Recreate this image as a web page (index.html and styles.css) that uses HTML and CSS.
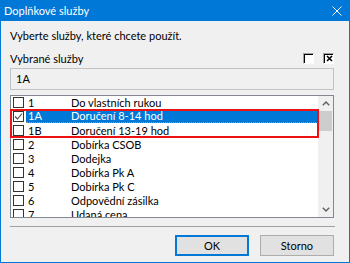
FILE: index.html
```html
<!DOCTYPE html>
<html lang="cs">
    <head>
        <meta charset="UTF-8" />
        <title>Doplňkové služby</title>
        <link rel="stylesheet" href="styles.css">
    </head>
    <body>
        <div class="window">
            <div class="titlebar">
                <span>Doplňkové služby</span>
                <svg class="close" width="10" height="10" viewBox="0 0 10 10">
                    <path d="M0.5 0.5L9.5 9.5M9.5 0.5L0.5 9.5" stroke="#fff" stroke-width="1" fill="none" />
                </svg>
            </div>

            <div class="content">
                <div class="prompt">Vyberte služby, které chcete použít.</div>

                <div class="label-row">
                    <span>Vybrané služby</span>
                    <div class="tools">
                        <span class="box3d"></span>
                        <span class="box3d">
                            <svg width="7" height="7" viewBox="0 0 7 7">
                                <path d="M1 1L6 6M6 1L1 6" stroke="#000" stroke-width="1.6" fill="none" />
                            </svg>
                        </span>
                    </div>
                </div>

                <div class="textbox">1A</div>

                <div class="listbox">
                    <div class="rows">
                        <div class="row"><span class="chk"></span><span class="cell"><span class="code">1</span>Do vlastních rukou</span></div>
                        <div class="row selected">
                            <span class="chk">
                                <svg width="9" height="9" viewBox="0 0 9 9">
                                    <path d="M1 4.5L3.5 7L8 1.5" stroke="#444" stroke-width="1.1" fill="none" />
                                </svg>
                            </span>
                            <span class="cell"><span class="code">1A</span>Doručení 8-14 hod</span>
                        </div>
                        <div class="row"><span class="chk"></span><span class="cell"><span class="code">1B</span>Doručení 13-19 hod</span></div>
                        <div class="row"><span class="chk"></span><span class="cell"><span class="code">2</span>Dobírka CSOB</span></div>
                        <div class="row"><span class="chk"></span><span class="cell"><span class="code">3</span>Dodejka</span></div>
                        <div class="row"><span class="chk"></span><span class="cell"><span class="code">4</span>Dobírka Pk A</span></div>
                        <div class="row"><span class="chk"></span><span class="cell"><span class="code">5</span>Dobírka Pk C</span></div>
                        <div class="row"><span class="chk"></span><span class="cell"><span class="code">6</span>Odpovědní zásilka</span></div>
                        <div class="row"><span class="chk"></span><span class="cell"><span class="code">7</span>Udaná cena</span></div>
                    </div>

                    <div class="scrollbar">
                        <div class="arrow">
                            <svg width="8" height="5" viewBox="0 0 8 5">
                                <path d="M0.8 4.2L4 1L7.2 4.2" stroke="#606060" stroke-width="1.4" fill="none" />
                            </svg>
                        </div>
                        <div class="thumb"></div>
                        <div class="track"></div>
                        <div class="arrow">
                            <svg width="8" height="5" viewBox="0 0 8 5">
                                <path d="M0.8 0.8L4 4L7.2 0.8" stroke="#606060" stroke-width="1.4" fill="none" />
                            </svg>
                        </div>
                    </div>

                    <div class="mark"></div>
                </div>

                <div class="separator"></div>

                <div class="buttons">
                    <button class="btn default">OK</button>
                    <button class="btn">Storno</button>
                </div>
            </div>
        </div>
    </body>
</html>
```

FILE: styles.css
```css
* {
    box-sizing: border-box;
}
body {
    margin: 0;
    font-family: Lato, "Liberation Sans", sans-serif;
    font-size: 11px;
    color: #000;
    background: #f0f0f0;
}
.window {
    width: 350px;
    height: 263px;
    border: 1px solid #0078d7;
    border-top: none;
    background: #f0f0f0;
    display: flex;
    flex-direction: column;
}
.titlebar {
    height: 21px;
    flex: none;
    background: #0078d7;
    color: #fff;
    display: flex;
    align-items: center;
    justify-content: space-between;
    padding: 0 7px 0 3px;
}
.content {
    padding: 8px 15px 0 9px;
    display: flex;
    flex-direction: column;
}
.prompt {
    line-height: 14px;
}
.label-row {
    margin-top: 8px;
    height: 14px;
    display: flex;
    align-items: center;
    justify-content: space-between;
}
.tools {
    display: flex;
    gap: 9px;
}
.box3d {
    width: 11px;
    height: 11px;
    background: #fff;
    border-top: 1px solid #a0a0a0;
    border-left: 1px solid #a0a0a0;
    border-right: 1px solid #fff;
    border-bottom: 1px solid #fff;
    box-shadow: inset 1px 1px 0 #000;
    display: flex;
    align-items: center;
    justify-content: center;
    padding: 1px 0 0 1px;
}
.textbox {
    margin-top: 3px;
    height: 22px;
    border: 1px solid #c2c2c2;
    padding-left: 5px;
    line-height: 20px;
}
.listbox {
    margin-top: 5px;
    height: 123px;
    border: 1px solid #828790;
    background: #fff;
    display: flex;
    position: relative;
}
.rows {
    flex: 1;
    overflow: hidden;
    padding-top: 0;
    margin-top: -1px;
}
.row {
    height: 14px;
    display: flex;
    align-items: center;
}
.chk {
    width: 11px;
    height: 11px;
    margin: 0 2px;
    border: 1px solid #333;
    background: #fff;
    display: flex;
    align-items: center;
    justify-content: center;
}
.cell {
    flex: 1;
    height: 14px;
    padding-left: 2px;
    display: flex;
    align-items: center;
    white-space: nowrap;
}
.code {
    width: 43px;
}
.selected .cell {
    background: #0078d7;
    color: #fff;
    border-bottom: 1px dotted #d98a3a;
}
.scrollbar {
    width: 15px;
    background: #f0f0f0;
    display: flex;
    flex-direction: column;
}
.arrow {
    height: 15px;
    display: flex;
    align-items: center;
    justify-content: center;
}
.thumb {
    height: 20px;
    margin: 0 1px;
    background: #cdcdcd;
}
.track {
    flex: 1;
}
.mark {
    position: absolute;
    left: -1px;
    top: 13px;
    width: 309px;
    height: 29px;
    border: 2px solid #ee1111;
}
.separator {
    margin-top: 8px;
    margin-right: -1px;
    border-top: 1px solid #a0a0a0;
}
.buttons {
    margin-top: 8px;
    display: flex;
    justify-content: flex-end;
    gap: 11px;
}
.btn {
    width: 74px;
    height: 21px;
    background: #e1e1e1;
    border: 1px solid #adadad;
    font-family: inherit;
    font-size: 11px;
    color: #000;
    padding: 0;
}
.btn.default {
    border: 2px solid #0078d7;
}
```
